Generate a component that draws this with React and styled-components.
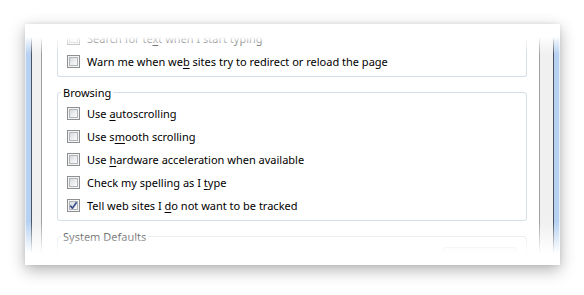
import React from 'react';
import styled, { createGlobalStyle } from 'styled-components';

const Global = createGlobalStyle`
  html, body { margin: 0; padding: 0; background: #fff; }
  body { font-family: "Noto Sans", "Open Sans", sans-serif; }
  * { box-sizing: border-box; }
`;

const Page = styled.div`
  width: 584px;
  height: 295px;
  padding: 24px 0 0 25px;
  background: #fff;
  overflow: hidden;
`;

const Card = styled.div`
  position: relative;
  width: 535px;
  height: 241px;
  background: #fff;
  overflow: hidden;
  display: flex;
  box-shadow: 0 5px 15px rgba(0, 0, 0, 0.3), 0 0 4px rgba(0, 0, 0, 0.08);
`;

const FrameLeft = styled.div`
  flex: 0 0 17px;
  background: linear-gradient(
    to right,
    #e2edf9 0 1px,
    #b7d2f1 1px 6px,
    #4b5463 6px 7px,
    #f0f0f0 7px 16px,
    #a0a0a0 16px 17px
  );
`;

const FrameRight = styled.div`
  flex: 0 0 21px;
  background: linear-gradient(
    to right,
    #a0a0a0 0 1px,
    #f0f0f0 1px 14px,
    #4b5463 14px 15px,
    #b7d2f1 15px 20px,
    #e2edf9 20px 21px
  );
`;

const Content = styled.div`
  flex: 1;
  padding: 0 12px 0 15px;
  font-size: 11px;
  color: #000;
`;

const Group = styled.fieldset`
  margin: ${p => (p.$first ? '0' : '8px 0 0')};
  padding: ${p => (p.$first ? '3px 9px 3px 9px' : '2px 9px 3px 9px')};
  border: 1px solid #d5dfe5;
  border-top: ${p => (p.$first ? 'none' : '1px solid #d5dfe5')};
  border-radius: ${p => (p.$first ? '0 0 3px 3px' : '3px')};
  min-width: 0;
`;

const Legend = styled.legend`
  padding: 0 2px;
  margin-left: -6px;
  line-height: 15px;
  height: 15px;
  font-size: 11px;
  color: #000;
`;

const Row = styled.label`
  display: flex;
  align-items: center;
  height: 23px;
  gap: 7px;
  white-space: nowrap;
`;

const Box = styled.span`
  position: relative;
  flex: 0 0 13px;
  width: 13px;
  height: 13px;
  border: 1px solid #8e8f8f;
  background: #f4f4f4;
  &::before {
    content: '';
    position: absolute;
    inset: 1px;
    border: 1px solid #b2b5ba;
    background: linear-gradient(135deg, #d6d8dc 0%, #eceef0 55%, #fafafa 100%);
  }
  svg { position: absolute; left: 0; top: 0; }
`;

const Mn = styled.span`
  text-decoration: underline;
  text-underline-offset: 2px;
`;

const ButtonRow = styled.div`
  display: flex;
  justify-content: flex-end;
  padding-top: 1px;
`;

const Button = styled.div`
  width: 75px;
  height: 23px;
  border: 1px solid #c6ccd3;
  border-radius: 3px;
  background: linear-gradient(#f2f2f2, #e2e2e2);
`;

const Fade = styled.div`
  position: absolute;
  inset: 0;
  pointer-events: none;
  background: linear-gradient(
    to bottom,
    #fff 0px,
    #fff 13px,
    rgba(255, 255, 255, 0.7) 17px,
    rgba(255, 255, 255, 0) 30px,
    rgba(255, 255, 255, 0) 198px,
    #fff 229px,
    #fff 100%
  );
`;

const Check = ({ checked }) => (
  <Box>
    {checked && (
      <svg width="11" height="11" viewBox="0 0 11 11">
        <path d="M2.3 5.6 L4.4 8.2 L8.6 2.2" fill="none" stroke="#3d4f8c" strokeWidth="1.7" strokeLinejoin="round" />
      </svg>
    )}
  </Box>
);

const Item = ({ checked, children }) => (
  <Row>
    <Check checked={checked} />
    <span>{children}</span>
  </Row>
);

export default function App() {
  return (
    <>
      <Global />
      <Page>
        <Card>
          <FrameLeft />
          <Content>
            <Group $first>
              <Item>Search for te<Mn>x</Mn>t when I start typing</Item>
              <Item>Warn me when we<Mn>b</Mn> sites try to redirect or reload the page</Item>
            </Group>
            <Group>
              <Legend>Browsing</Legend>
              <Item>Use <Mn>a</Mn>utoscrolling</Item>
              <Item>Use s<Mn>m</Mn>ooth scrolling</Item>
              <Item>Use <Mn>h</Mn>ardware acceleration when available</Item>
              <Item>Check my spelling as I <Mn>t</Mn>ype</Item>
              <Item checked>Tell web sites I <Mn>d</Mn>o not want to be tracked</Item>
            </Group>
            <Group>
              <Legend>System Defaults</Legend>
              <ButtonRow>
                <Button />
              </ButtonRow>
            </Group>
          </Content>
          <FrameRight />
          <Fade />
        </Card>
      </Page>
    </>
  );
}
